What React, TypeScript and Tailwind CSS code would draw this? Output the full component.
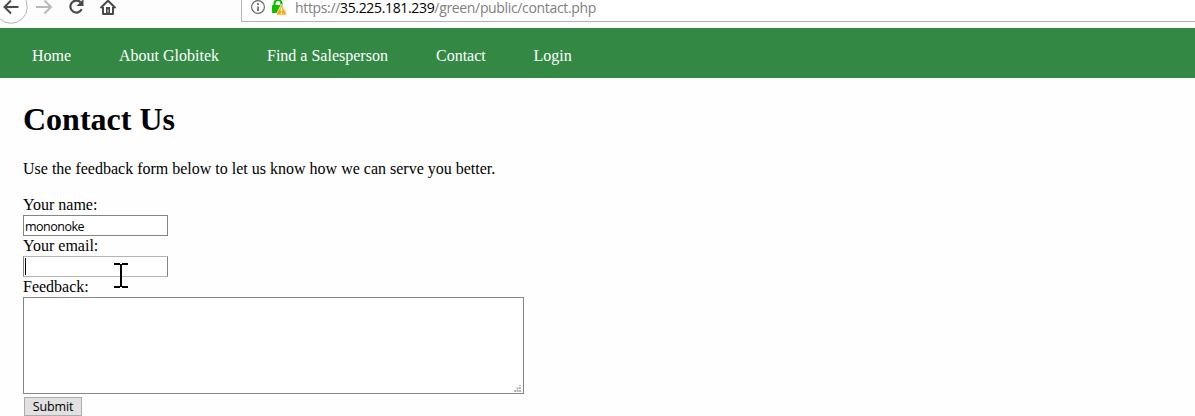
import React from "react";

const links = [
  { label: "Home", width: "w-[87px]" },
  { label: "About Globitek", width: "w-[148px]" },
  { label: "Find a Salesperson", width: "w-[169px]" },
  { label: "Contact", width: "w-[97.5px]" },
  { label: "Login", width: "w-[80px]" },
];

function BrowserBar() {
  return (
    <header className="flex h-7 items-start overflow-hidden bg-[#fdfdfd]">
      <svg className="h-7 w-[241px] shrink-0" viewBox="0 0 241 28" fill="none">
        <circle cx="11" cy="7" r="16.3" fill="#fefefe" stroke="#b5b5b5" />
        <path d="M18.5 7H4.5M11 .5L4.5 7l6.500 6.500" stroke="#4a4a4a" strokeWidth="2" />
        <path d="M36 7h15M44.500 .5L51 7l-6.500 6.500" stroke="#b8b8b8" strokeWidth="2" />
        <path d="M80.500 2.200A6 6 0 1 0 81.700 9.300" stroke="#4a4a4a" strokeWidth="2.200" />
        <path d="M83.500 -1v7h-7z" fill="#4a4a4a" />
        <path d="M100.500 8L108 .7 115.500 8M103 7v7h10V7" stroke="#4a4a4a" strokeWidth="2" strokeLinejoin="round" />
        <path d="M106 7h4v7h-4z" fill="#4a4a4a" />
        <path d="M107.500 9.500h1v3h-1z" fill="#ddd" />
      </svg>
      <div className="flex h-[22px] flex-1 items-start border-b border-l border-[#b2b2b2] bg-white">
        <svg className="h-[21px] w-[53px] shrink-0" viewBox="242 0 53 21" fill="none">
          <circle cx="258" cy="7" r="6.400" stroke="#6a6a6a" strokeWidth="1.200" />
          <path d="M258 3v2M258 6.500v4.500" stroke="#666" strokeWidth="1.700" />
          <path d="M274.500 6V3.500a3.500 3.500 0 0 1 7 0V6" stroke="#12bc00" strokeWidth="2.200" />
          <rect x="272" y="5" width="11" height="8" rx="1" fill="#12bc00" />
          <path d="M281.500 4l-5.500 11h11z" fill="#fba500" stroke="#fff" strokeWidth=".7" />
          <path d="M281.500 7.500v3.800M281.500 12.500v1.500" stroke="#fff" strokeWidth="1.500" />
        </svg>
        <div className="whitespace-nowrap font-['Open_Sans','Noto_Sans',sans-serif] text-[14px] leading-[15px] tracking-[-0.340px] text-[#808080]">
          https://<span className="text-black">35.225.181.239</span>/green/public/contact.php
        </div>
      </div>
    </header>
  );
}

export default function App() {
  return (
    <div className="h-[416px] overflow-hidden bg-[#fefefe] font-['Liberation_Serif',serif] text-[16px] text-black">
      <BrowserBar />
      <nav className="flex h-[50px] items-center bg-[#338944] pl-8 pt-[5px] leading-[18px] text-white">
        {links.map(({ label, width }) => (
          <a key={label} className={`${width} whitespace-nowrap`}>{label}</a>
        ))}
      </nav>
      <main className="pl-[23px] pt-[23px]">
        <h1 className="h-9 text-[32px] font-bold leading-9">Contact Us</h1>
        <p className="mt-[23px] h-[18px] whitespace-nowrap leading-[18px]">
          Use the feedback form below to let us know how we can serve you better.
        </p>
        <form className="mt-[18px] flex flex-col items-start">
          <label htmlFor="name" className="h-[19px] leading-[18px]">Your name:</label>
          <input
            id="name"
            defaultValue="mononoke"
            className="h-[21px] w-[145px] border border-[#858585] bg-white px-px pt-px font-['Open_Sans','Noto_Sans',sans-serif] text-[12.500px] tracking-[-0.500px] text-black outline-none"
          />
          <label htmlFor="email" className="h-5 pt-px leading-[18px]">Your email:</label>
          <div className="relative flex">
            <input id="email" className="h-[21px] w-[145px] border border-[#858585] border-y-[#b5b5b5] bg-white px-px outline-none" />
            <span className="absolute left-[2px] top-[2px] h-[17px] w-px bg-black" />
            <svg className="absolute left-[91px] top-[7px]" width="14" height="25" viewBox="0 0 14 25">
              <path d="M0 1h6M8 1h6M0 24h6M8 24h6M7 1v23" fill="none" stroke="black" strokeWidth="2" />
            </svg>
          </div>
          <label htmlFor="feedback" className="h-5 pt-px leading-[18px]">Feedback:</label>
          <div className="relative flex">
            <textarea id="feedback" className="h-[97px] w-[501px] resize-none border border-[#858585] bg-white outline-none" />
            <svg className="absolute bottom-[2px] right-[3px]" width="7" height="7" viewBox="0 0 7 7" fill="#b4b4b4">
              <path d="M5 0h2v1H5zM5 2h2v2H5zM5 5h2v2H5zM2.500 2.500h2v2h-2zM2.500 5h2v2h-2zM0 5h2v2H0z" />
            </svg>
          </div>
          <button type="button" className="ml-px mt-[3px] h-[19px] w-[58px] border border-[#adadad] bg-[#e1e1e1] font-['Open_Sans','Noto_Sans',sans-serif] text-[12.500px] leading-[17px] tracking-[-0.150px]">
            Submit
          </button>
        </form>
      </main>
    </div>
  );
}
